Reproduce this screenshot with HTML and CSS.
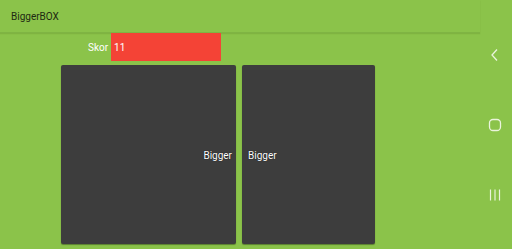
FILE: index.html
```html
<!DOCTYPE html>
<html lang="en">
<head>
<meta charset="utf-8">
<title>BiggerBOX</title>
<link rel="stylesheet" href="styles.css">
</head>
<body>
<div class="screen">
  <div class="app">
    <div class="toolbar">BiggerBOX</div>
    <div class="score">
      <span class="score-label">Skor</span>
      <span class="score-value">11</span>
    </div>
    <div class="boxes">
      <div class="box box-left"><span>Bigger</span></div>
      <div class="box box-right"><span>Bigger</span></div>
    </div>
  </div>
  <div class="navbar">
    <svg class="nav-icon" width="12" height="14" viewBox="0 0 12 14">
      <polyline points="8,1.5 3,7 8,12.5" fill="none" stroke="#eaf4dc" stroke-width="1.3"/>
    </svg>
    <svg class="nav-icon" width="14" height="14" viewBox="0 0 14 14">
      <rect x="1.5" y="1.5" width="11" height="11" rx="3.5" fill="none" stroke="#eaf4dc" stroke-width="1.3"/>
    </svg>
    <svg class="nav-icon" width="14" height="14" viewBox="0 0 14 14">
      <line x1="2.5" y1="1.5" x2="2.5" y2="12.5" stroke="#eaf4dc" stroke-width="1.2"/>
      <line x1="7" y1="1.5" x2="7" y2="12.5" stroke="#eaf4dc" stroke-width="1.2"/>
      <line x1="11.5" y1="1.5" x2="11.5" y2="12.5" stroke="#eaf4dc" stroke-width="1.2"/>
    </svg>
  </div>
</div>
</body>
</html>
```

FILE: styles.css
```css
* { margin: 0; padding: 0; box-sizing: border-box; }
html, body { width: 512px; height: 249px; overflow: hidden; }
body { background: #8bc34a; font-family: Roboto, 'Noto Sans', sans-serif; }

.screen { display: flex; height: 249px; }
.app { width: 480px; display: flex; flex-direction: column; }

.toolbar { height: 33px; padding-left: 11px; display: flex; align-items: center; font-size: 10px; color: #1e2a12; border-bottom: 1px solid #7fb443; box-shadow: 0 1px 1px rgba(90, 130, 40, 0.25); }

.score { display: flex; align-items: stretch; height: 28px; padding-left: 88px; }
.score-label { display: flex; align-items: center; padding-right: 3px; font-size: 10px; color: #fff; }
.score-value { display: flex; align-items: center; width: 110px; padding-left: 3px; background: #f44336; font-size: 10px; color: #fff; }

.boxes { display: flex; gap: 6px; margin-top: 4px; padding-left: 61px; }
.box { height: 179px; background: #3d3d3d; border-radius: 2px; box-shadow: 0 1px 1px rgba(0, 0, 0, 0.35); display: flex; align-items: center; font-size: 10px; color: #fff; text-shadow: 0 0 1px #000; }
.box span { margin-top: 2px; }
.box-left { width: 175px; justify-content: flex-end; padding-right: 4px; }
.box-right { width: 133px; padding-left: 6px; }

.navbar { width: 32px; display: flex; flex-direction: column; align-items: center; padding-top: 48px; gap: 56px; }
.nav-icon { display: block; margin-left: -2px; }
```
